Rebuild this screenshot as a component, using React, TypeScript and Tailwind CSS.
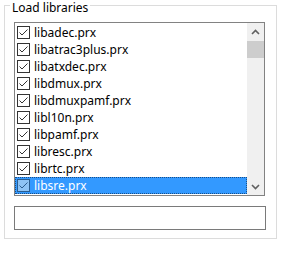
import React from 'react';

const libs = [
    'libadec.prx',
    'libatrac3plus.prx',
    'libatxdec.prx',
    'libdmux.prx',
    'libdmuxpamf.prx',
    'libl10n.prx',
    'libpamf.prx',
    'libresc.prx',
    'librtc.prx',
    'libsre.prx',
];

const Check: React.FC<{ selected?: boolean }> = ({ selected }) => (
    <span
        className={
            selected
                ? 'w-[13px] h-[13px] shrink-0 border border-[#2a5d90] bg-[#8ec3f5] flex items-center justify-center'
                : 'w-[13px] h-[13px] shrink-0 border border-[#333333] bg-white flex items-center justify-center'
        }
    >
        <svg width="11" height="11" viewBox="0 0 11 11">
            <path d="M1.5 5.5 L4 8 L9.5 2.5" fill="none" stroke={selected ? '#2a5d90' : '#333333'} strokeWidth="1" />
        </svg>
    </span>
);

export default function App() {
    return (
        <div className="w-[282px] h-[254px] bg-white pt-[5px] px-[4px] font-['Segoe_UI','Noto_Sans',sans-serif] text-[12px] text-black">
            <div className="relative border border-[#dcdcdc] w-[273px] h-[234px]">
                <span className="absolute top-[-6px] left-[5px] px-[2px] bg-white leading-[16px]">Load libraries</span>

                <div className="ml-[9px] mt-[16px] w-[251px] h-[174px] border border-[#828282] flex">
                    <div className="flex-1 pt-[1px]">
                        {libs.map((name, i) => {
                            const selected = i === libs.length - 1;
                            return (
                                <div
                                    key={name}
                                    className={
                                        selected
                                            ? 'h-[17px] flex items-center gap-[4px] pl-[1px] bg-[#3399ff] text-white border border-dotted border-[#1a4f87]'
                                            : 'h-[17px] flex items-center gap-[4px] pl-[2px]'
                                    }
                                >
                                    <Check selected={selected} />
                                    <span className="leading-[17px] whitespace-nowrap">{name}</span>
                                </div>
                            );
                        })}
                    </div>
                    <div className="w-[17px] bg-[#f0f0f0] flex flex-col">
                        <div className="h-[17px] flex items-center justify-center">
                            <svg width="9" height="6" viewBox="0 0 9 6">
                                <path d="M1 5 L4.5 1.5 L8 5" fill="none" stroke="#606060" strokeWidth="1.6" />
                            </svg>
                        </div>
                        <div className="mt-[1px] h-[17px] bg-[#cdcdcd]" />
                        <div className="flex-1" />
                        <div className="h-[17px] flex items-center justify-center">
                            <svg width="9" height="6" viewBox="0 0 9 6">
                                <path d="M1 1 L4.5 4.5 L8 1" fill="none" stroke="#606060" strokeWidth="1.6" />
                            </svg>
                        </div>
                    </div>
                </div>

                <div className="ml-[9px] mt-[10px] w-[252px] h-[24px] border border-[#7a7a7a] bg-white" />
            </div>
        </div>
    );
}
